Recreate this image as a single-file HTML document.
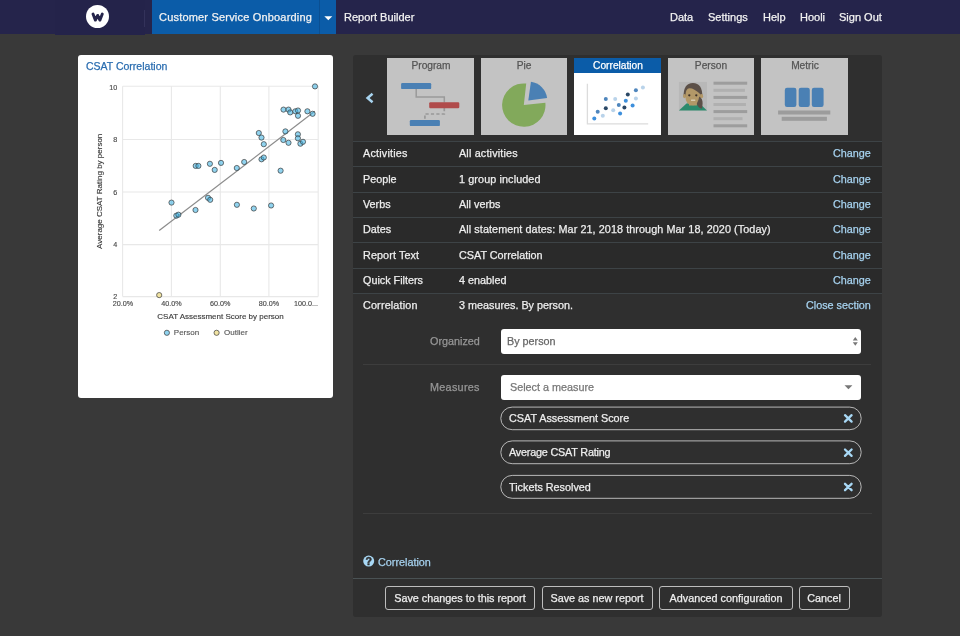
<!DOCTYPE html>
<html><head><meta charset="utf-8"><title>Report Builder</title>
<style>
html,body{margin:0;padding:0;width:960px;height:636px;overflow:hidden;background:#393939;font-family:"Liberation Sans",sans-serif;}
.a{position:absolute;box-sizing:border-box;}
.t{position:absolute;white-space:nowrap;line-height:1;will-change:transform;-webkit-text-stroke:0.25px currentColor;}
svg{position:absolute;left:0;top:0;}
</style></head><body>
<div class="a" style="left:0;top:0;width:960px;height:34px;background:#25244b"></div>
<div class="a" style="left:54.5px;top:0;width:90.5px;height:35px;background:#24234a"></div>
<div class="a" style="left:86px;top:5.2px;width:23px;height:23px;border-radius:50%;background:#fff"></div>
<div class="a" style="left:144px;top:10px;width:1px;height:17px;background:#33325a"></div>
<div class="a" style="left:152px;top:0;width:184.3px;height:34px;background:#0b5ca8"></div>
<div class="a" style="left:318.5px;top:0;width:1px;height:34px;background:#0a4f92"></div>
<div class="t" style="left:158.75px;top:11.89px;font-size:11.0px;color:#f2f2f2;letter-spacing:0.19px;">Customer Service Onboarding</div>
<div class="t" style="left:343.75px;top:11.89px;font-size:11.0px;color:#f2f2f2;">Report Builder</div>
<div class="t" style="left:670.00px;top:11.89px;font-size:11.0px;color:#f2f2f2;">Data</div>
<div class="t" style="left:707.50px;top:11.89px;font-size:11.0px;color:#f2f2f2;">Settings</div>
<div class="t" style="left:762.50px;top:11.89px;font-size:11.0px;color:#f2f2f2;">Help</div>
<div class="t" style="left:799.75px;top:11.89px;font-size:11.0px;color:#f2f2f2;">Hooli</div>
<div class="t" style="left:838.75px;top:11.89px;font-size:11.0px;color:#f2f2f2;">Sign Out</div>
<div class="a" style="left:78px;top:55px;width:254.5px;height:343px;background:#fff;border-radius:3px"></div>
<div class="t" style="left:86.00px;top:60.71px;font-size:10.5px;color:#2a6db0;">CSAT Correlation</div>
<div class="a" style="left:353px;top:55px;width:529px;height:562px;background:#2f2f2f;border-radius:3px"></div>
<div class="a" style="left:353px;top:141px;width:529px;height:152px;background:#2a2a2a"></div>
<div class="a" style="left:353px;top:141px;width:529px;height:1px;background:#3d4346"></div>
<div class="t" style="left:363.40px;top:148.26px;font-size:10.8px;color:#eeeeee;letter-spacing:0.2px;">Activities</div>
<div class="t" style="left:458.70px;top:148.26px;font-size:10.8px;color:#eeeeee;letter-spacing:0.17px;">All activities</div>
<div class="t" style="right:88.90px;top:148.26px;font-size:10.8px;color:#a6d2ef;">Change</div>
<div class="a" style="left:353px;top:166px;width:529px;height:1px;background:#3d4346"></div>
<div class="t" style="left:363.40px;top:173.59px;font-size:10.8px;color:#eeeeee;">People</div>
<div class="t" style="left:458.70px;top:173.59px;font-size:10.8px;color:#eeeeee;letter-spacing:0.11px;">1 group included</div>
<div class="t" style="right:88.90px;top:173.59px;font-size:10.8px;color:#a6d2ef;">Change</div>
<div class="a" style="left:353px;top:192px;width:529px;height:1px;background:#3d4346"></div>
<div class="t" style="left:363.40px;top:198.92px;font-size:10.8px;color:#eeeeee;">Verbs</div>
<div class="t" style="left:458.70px;top:198.92px;font-size:10.8px;color:#eeeeee;">All verbs</div>
<div class="t" style="right:88.90px;top:198.92px;font-size:10.8px;color:#a6d2ef;">Change</div>
<div class="a" style="left:353px;top:217px;width:529px;height:1px;background:#3d4346"></div>
<div class="t" style="left:363.40px;top:224.26px;font-size:10.8px;color:#eeeeee;">Dates</div>
<div class="t" style="left:458.70px;top:224.26px;font-size:10.8px;color:#eeeeee;letter-spacing:0.08px;">All statement dates: Mar 21, 2018 through Mar 18, 2020 (Today)</div>
<div class="t" style="right:88.90px;top:224.26px;font-size:10.8px;color:#a6d2ef;">Change</div>
<div class="a" style="left:353px;top:242px;width:529px;height:1px;background:#3d4346"></div>
<div class="t" style="left:363.40px;top:249.59px;font-size:10.8px;color:#eeeeee;letter-spacing:0.1px;">Report Text</div>
<div class="t" style="left:458.70px;top:249.59px;font-size:10.8px;color:#eeeeee;">CSAT Correlation</div>
<div class="t" style="right:88.90px;top:249.59px;font-size:10.8px;color:#a6d2ef;">Change</div>
<div class="a" style="left:353px;top:268px;width:529px;height:1px;background:#3d4346"></div>
<div class="t" style="left:363.40px;top:274.92px;font-size:10.8px;color:#eeeeee;">Quick Filters</div>
<div class="t" style="left:458.70px;top:274.92px;font-size:10.8px;color:#eeeeee;">4 enabled</div>
<div class="t" style="right:88.90px;top:274.92px;font-size:10.8px;color:#a6d2ef;">Change</div>
<div class="a" style="left:353px;top:293px;width:529px;height:1px;background:#3d4346"></div>
<div class="t" style="left:363.40px;top:300.26px;font-size:10.8px;color:#eeeeee;letter-spacing:0.16px;">Correlation</div>
<div class="t" style="left:458.70px;top:300.26px;font-size:10.8px;color:#eeeeee;">3 measures. By person.</div>
<div class="t" style="right:88.90px;top:300.26px;font-size:10.8px;color:#a6d2ef;">Close section</div>
<div class="t" style="right:480.00px;top:335.96px;font-size:10.8px;color:#979797;">Organized</div>
<div class="a" style="left:500.7px;top:329.1px;width:360.3px;height:24.7px;background:#fff;border-radius:3px"></div>
<div class="t" style="left:507.00px;top:335.66px;font-size:10.8px;color:#666;">By person</div>
<div class="a" style="left:363.3px;top:364px;width:508.2px;height:1px;background:#3d3d3d"></div>
<div class="t" style="right:480.00px;top:382.06px;font-size:10.8px;color:#979797;letter-spacing:0.3px;">Measures</div>
<div class="a" style="left:500.7px;top:375px;width:360.3px;height:24.7px;background:#fff;border-radius:3px"></div>
<div class="t" style="left:509.70px;top:381.86px;font-size:10.8px;color:#777;">Select a measure</div>
<div class="t" style="left:508.60px;top:412.96px;font-size:10.8px;color:#eeeeee;">CSAT Assessment Score</div>
<div class="t" style="left:508.60px;top:447.26px;font-size:10.8px;color:#eeeeee;letter-spacing:-0.19px;">Average CSAT Rating</div>
<div class="t" style="left:508.60px;top:481.56px;font-size:10.8px;color:#eeeeee;">Tickets Resolved</div>
<div class="a" style="left:363.3px;top:513px;width:508.4px;height:1px;background:#3d3d3d"></div>
<div class="t" style="left:378.00px;top:556.66px;font-size:10.8px;color:#a6d2ef;letter-spacing:0px;">Correlation</div>
<div class="a" style="left:353px;top:578px;width:529px;height:1px;background:#4a5254"></div>
<div class="a" style="left:385px;top:586.4px;width:150.40px;height:24px;border:1px solid #bdbdbd;border-radius:3px"></div>
<div class="t" style="left:260.20px;width:400px;text-align:center;top:592.86px;font-size:10.8px;color:#eeeeee;">Save changes to this report</div>
<div class="a" style="left:542.1px;top:586.4px;width:110.50px;height:24px;border:1px solid #bdbdbd;border-radius:3px"></div>
<div class="t" style="left:397.35px;width:400px;text-align:center;top:592.86px;font-size:10.8px;color:#eeeeee;">Save as new report</div>
<div class="a" style="left:658.75px;top:586.4px;width:133.75px;height:24px;border:1px solid #bdbdbd;border-radius:3px"></div>
<div class="t" style="left:525.62px;width:400px;text-align:center;top:592.86px;font-size:10.8px;color:#eeeeee;">Advanced configuration</div>
<div class="a" style="left:799px;top:586.4px;width:50.50px;height:24px;border:1px solid #bdbdbd;border-radius:3px"></div>
<div class="t" style="left:624.25px;width:400px;text-align:center;top:592.86px;font-size:10.8px;color:#eeeeee;">Cancel</div>
<div class="a" style="left:387px;top:58px;width:87px;height:77px;background:#c3c3c3"></div>
<div class="t" style="left:230.50px;width:400px;text-align:center;top:60.67px;font-size:10.2px;color:#555555;">Program</div>
<div class="a" style="left:481px;top:58px;width:86px;height:77px;background:#c3c3c3"></div>
<div class="t" style="left:324.00px;width:400px;text-align:center;top:60.67px;font-size:10.2px;color:#555555;">Pie</div>
<div class="a" style="left:574px;top:58px;width:87px;height:77px;background:#fff"></div>
<div class="a" style="left:574px;top:58px;width:87px;height:15px;background:#0b5ca8"></div>
<div class="t" style="left:417.50px;width:400px;text-align:center;top:60.67px;font-size:10.2px;color:#ffffff;">Correlation</div>
<div class="a" style="left:668px;top:58px;width:86px;height:77px;background:#c3c3c3"></div>
<div class="t" style="left:511.00px;width:400px;text-align:center;top:60.67px;font-size:10.2px;color:#555555;">Person</div>
<div class="a" style="left:761px;top:58px;width:87px;height:77px;background:#c3c3c3"></div>
<div class="t" style="left:604.50px;width:400px;text-align:center;top:60.67px;font-size:10.2px;color:#555555;">Metric</div>
<svg width="960" height="636" viewBox="0 0 960 636">
<path d="M93.0 14.0 L95.4 20.1 L97.65 15.4 L99.9 20.1 L102.3 14.0" fill="none" stroke="#25244b" stroke-width="2.9" stroke-linecap="round" stroke-linejoin="round"/>
<path d="M324.3 16.3 L332.3 16.3 L328.3 20.3 Z" fill="#fff"/>
<line x1="122.6" y1="86.3" x2="122.6" y2="296.6" stroke="#e8e8e8" stroke-width="1.1"/>
<line x1="171.4" y1="86.3" x2="171.4" y2="296.6" stroke="#e8e8e8" stroke-width="1.1"/>
<line x1="220.3" y1="86.3" x2="220.3" y2="296.6" stroke="#e8e8e8" stroke-width="1.1"/>
<line x1="268.9" y1="86.3" x2="268.9" y2="296.6" stroke="#e8e8e8" stroke-width="1.1"/>
<line x1="318.2" y1="86.3" x2="318.2" y2="296.6" stroke="#e8e8e8" stroke-width="1.1"/>
<line x1="122.6" y1="86.3" x2="318.2" y2="86.3" stroke="#e8e8e8" stroke-width="1.1"/>
<line x1="122.6" y1="139.5" x2="318.2" y2="139.5" stroke="#e8e8e8" stroke-width="1.1"/>
<line x1="122.6" y1="192.0" x2="318.2" y2="192.0" stroke="#e8e8e8" stroke-width="1.1"/>
<line x1="122.6" y1="244.6" x2="318.2" y2="244.6" stroke="#e8e8e8" stroke-width="1.1"/>
<line x1="122.6" y1="296.6" x2="318.2" y2="296.6" stroke="#e8e8e8" stroke-width="1.1"/>
<line x1="159.2" y1="230.6" x2="314.8" y2="111.3" stroke="#8c8c8c" stroke-width="1.2"/>
<circle cx="315" cy="86.4" r="2.6" fill="#3fb3e3" fill-opacity="0.58" stroke="#3a3a3a" stroke-width="0.7"/>
<circle cx="283.5" cy="109.6" r="2.6" fill="#3fb3e3" fill-opacity="0.58" stroke="#3a3a3a" stroke-width="0.7"/>
<circle cx="288.5" cy="109.6" r="2.6" fill="#3fb3e3" fill-opacity="0.58" stroke="#3a3a3a" stroke-width="0.7"/>
<circle cx="290.2" cy="112.4" r="2.6" fill="#3fb3e3" fill-opacity="0.58" stroke="#3a3a3a" stroke-width="0.7"/>
<circle cx="295.3" cy="111.3" r="2.6" fill="#3fb3e3" fill-opacity="0.58" stroke="#3a3a3a" stroke-width="0.7"/>
<circle cx="298" cy="110.5" r="2.6" fill="#3fb3e3" fill-opacity="0.58" stroke="#3a3a3a" stroke-width="0.7"/>
<circle cx="298" cy="115.8" r="2.6" fill="#3fb3e3" fill-opacity="0.58" stroke="#3a3a3a" stroke-width="0.7"/>
<circle cx="307.4" cy="111.3" r="2.6" fill="#3fb3e3" fill-opacity="0.58" stroke="#3a3a3a" stroke-width="0.7"/>
<circle cx="312.6" cy="113.8" r="2.6" fill="#3fb3e3" fill-opacity="0.58" stroke="#3a3a3a" stroke-width="0.7"/>
<circle cx="258.8" cy="133" r="2.6" fill="#3fb3e3" fill-opacity="0.58" stroke="#3a3a3a" stroke-width="0.7"/>
<circle cx="261.5" cy="137.6" r="2.6" fill="#3fb3e3" fill-opacity="0.58" stroke="#3a3a3a" stroke-width="0.7"/>
<circle cx="263.8" cy="144.2" r="2.6" fill="#3fb3e3" fill-opacity="0.58" stroke="#3a3a3a" stroke-width="0.7"/>
<circle cx="285.4" cy="131.4" r="2.6" fill="#3fb3e3" fill-opacity="0.58" stroke="#3a3a3a" stroke-width="0.7"/>
<circle cx="283.3" cy="140" r="2.6" fill="#3fb3e3" fill-opacity="0.58" stroke="#3a3a3a" stroke-width="0.7"/>
<circle cx="288.5" cy="142.8" r="2.6" fill="#3fb3e3" fill-opacity="0.58" stroke="#3a3a3a" stroke-width="0.7"/>
<circle cx="297.9" cy="134.3" r="2.6" fill="#3fb3e3" fill-opacity="0.58" stroke="#3a3a3a" stroke-width="0.7"/>
<circle cx="297.9" cy="138.3" r="2.6" fill="#3fb3e3" fill-opacity="0.58" stroke="#3a3a3a" stroke-width="0.7"/>
<circle cx="300.4" cy="143.7" r="2.6" fill="#3fb3e3" fill-opacity="0.58" stroke="#3a3a3a" stroke-width="0.7"/>
<circle cx="303" cy="141.8" r="2.6" fill="#3fb3e3" fill-opacity="0.58" stroke="#3a3a3a" stroke-width="0.7"/>
<circle cx="261.5" cy="159.3" r="2.6" fill="#3fb3e3" fill-opacity="0.58" stroke="#3a3a3a" stroke-width="0.7"/>
<circle cx="263.8" cy="157.5" r="2.6" fill="#3fb3e3" fill-opacity="0.58" stroke="#3a3a3a" stroke-width="0.7"/>
<circle cx="244.2" cy="162" r="2.6" fill="#3fb3e3" fill-opacity="0.58" stroke="#3a3a3a" stroke-width="0.7"/>
<circle cx="236.8" cy="168" r="2.6" fill="#3fb3e3" fill-opacity="0.58" stroke="#3a3a3a" stroke-width="0.7"/>
<circle cx="221" cy="162.9" r="2.6" fill="#3fb3e3" fill-opacity="0.58" stroke="#3a3a3a" stroke-width="0.7"/>
<circle cx="280.6" cy="170.7" r="2.6" fill="#3fb3e3" fill-opacity="0.58" stroke="#3a3a3a" stroke-width="0.7"/>
<circle cx="195.7" cy="165.9" r="2.6" fill="#3fb3e3" fill-opacity="0.58" stroke="#3a3a3a" stroke-width="0.7"/>
<circle cx="198.4" cy="165.9" r="2.6" fill="#3fb3e3" fill-opacity="0.58" stroke="#3a3a3a" stroke-width="0.7"/>
<circle cx="209.9" cy="163.8" r="2.6" fill="#3fb3e3" fill-opacity="0.58" stroke="#3a3a3a" stroke-width="0.7"/>
<circle cx="214.7" cy="169.9" r="2.6" fill="#3fb3e3" fill-opacity="0.58" stroke="#3a3a3a" stroke-width="0.7"/>
<circle cx="171.5" cy="202.6" r="2.6" fill="#3fb3e3" fill-opacity="0.58" stroke="#3a3a3a" stroke-width="0.7"/>
<circle cx="176.3" cy="215.7" r="2.6" fill="#3fb3e3" fill-opacity="0.58" stroke="#3a3a3a" stroke-width="0.7"/>
<circle cx="178.4" cy="214.7" r="2.6" fill="#3fb3e3" fill-opacity="0.58" stroke="#3a3a3a" stroke-width="0.7"/>
<circle cx="195.5" cy="210" r="2.6" fill="#3fb3e3" fill-opacity="0.58" stroke="#3a3a3a" stroke-width="0.7"/>
<circle cx="208" cy="197.8" r="2.6" fill="#3fb3e3" fill-opacity="0.58" stroke="#3a3a3a" stroke-width="0.7"/>
<circle cx="210.2" cy="199.8" r="2.6" fill="#3fb3e3" fill-opacity="0.58" stroke="#3a3a3a" stroke-width="0.7"/>
<circle cx="236.9" cy="204.8" r="2.6" fill="#3fb3e3" fill-opacity="0.58" stroke="#3a3a3a" stroke-width="0.7"/>
<circle cx="253.8" cy="208.5" r="2.6" fill="#3fb3e3" fill-opacity="0.58" stroke="#3a3a3a" stroke-width="0.7"/>
<circle cx="271.1" cy="205.5" r="2.6" fill="#3fb3e3" fill-opacity="0.58" stroke="#3a3a3a" stroke-width="0.7"/>
<circle cx="159.2" cy="295.1" r="2.6" fill="#f1e3a2" stroke="#3a3a3a" stroke-width="0.7"/>
<circle cx="166.9" cy="332.8" r="2.6" fill="#8fd3ef" stroke="#3a3a3a" stroke-width="0.7"/>
<circle cx="216.6" cy="332.8" r="2.6" fill="#f1e3a2" stroke="#3a3a3a" stroke-width="0.7"/>
<g font-family="Liberation Sans" font-size="7.2" fill="#4a4a4a" stroke="#4a4a4a" stroke-width="0.15">
<text x="117.3" y="89.9" text-anchor="end">10</text>
<text x="117.3" y="142.1" text-anchor="end">8</text>
<text x="117.3" y="194.7" text-anchor="end">6</text>
<text x="117.3" y="247.2" text-anchor="end">4</text>
<text x="117.3" y="299" text-anchor="end">2</text>
<text x="123" y="306.4" text-anchor="middle">20.0%</text>
<text x="171.4" y="306.4" text-anchor="middle">40.0%</text>
<text x="220.3" y="306.4" text-anchor="middle">60.0%</text>
<text x="268.9" y="306.4" text-anchor="middle">80.0%</text>
<text x="294" y="306.4">100.0...</text>
</g>
<g font-family="Liberation Sans" font-size="8" fill="#3c3c3c" stroke="#3c3c3c" stroke-width="0.15">
<text x="220.5" y="318.6" text-anchor="middle">CSAT Assessment Score by person</text>
<text x="0" y="0" text-anchor="middle" transform="translate(101.6 191.3) rotate(-90)">Average CSAT Rating by person</text>
</g>
<g font-family="Liberation Sans" font-size="8" fill="#5a5a5a" stroke="#5a5a5a" stroke-width="0.15">
<text x="173.8" y="334.5">Person</text>
<text x="224.1" y="334.5">Outlier</text>
</g>
<path d="M371.6 94.6 L367.6 98 L371.6 101.4" fill="none" stroke="#a8d4f0" stroke-width="2.5" stroke-linecap="square"/>
<path d="M416.2 89 V97 H444.3 V102.5" fill="none" stroke="#9a9a9a" stroke-width="1.5"/>
<path d="M444.3 108 V114 H424.9 V120" fill="none" stroke="#999" stroke-width="1.7" stroke-dasharray="3.2 2.2"/>
<rect x="401.1" y="83.1" width="30.1" height="6" rx="1.2" fill="#4a80b4"/>
<rect x="429.2" y="102.2" width="30.1" height="6" rx="1.2" fill="#b04b4b"/>
<rect x="409.8" y="120.1" width="30.1" height="6" rx="1.2" fill="#4a80b4"/>
<path d="M523.8 105.1 L545.36 102.64 A21.7 21.7 0 1 1 526.22 83.54 Z" fill="#82a95b"/>
<path d="M528.3 100.6 L530.94 81.78 A19.0 19.0 0 0 1 547.12 97.96 Z" fill="#4a80b4"/>
<path d="M587.4 83.7 V123.9 H648.2" fill="none" stroke="#dcdcdc" stroke-width="1.3"/>
<circle cx="594.3" cy="118.5" r="2" fill="#3d8fdc"/>
<circle cx="597.7" cy="111.8" r="2" fill="#4f86bd"/>
<circle cx="602.8" cy="115.8" r="2" fill="#b9d3ea"/>
<circle cx="605.8" cy="99.1" r="2" fill="#4f86bd"/>
<circle cx="605.8" cy="108.2" r="2" fill="#2b4866"/>
<circle cx="613.2" cy="110.2" r="2" fill="#b9d3ea"/>
<circle cx="615.2" cy="98.9" r="2" fill="#b9d3ea"/>
<circle cx="618.8" cy="105.1" r="2" fill="#4f86bd"/>
<circle cx="620.1" cy="113.6" r="2" fill="#3d8fdc"/>
<circle cx="624.4" cy="107.4" r="2" fill="#2b4866"/>
<circle cx="625.8" cy="100.7" r="2" fill="#3d8fdc"/>
<circle cx="627.8" cy="94.6" r="2" fill="#2b4866"/>
<circle cx="632.6" cy="105.4" r="2" fill="#3d8fdc"/>
<circle cx="635.9" cy="98.6" r="2" fill="#b9d3ea"/>
<circle cx="635.9" cy="90.3" r="2" fill="#4f86bd"/>
<circle cx="642.9" cy="87.4" r="2" fill="#b9d3ea"/>
<rect x="678.9" y="81.9" width="28.1" height="28.6" fill="#b8b8b8"/>
<path d="M678.9 110.5 L686.5 103.4 Q692.8 102 699.5 103.4 L707 110.5 Z" fill="#2c8a6c"/>
<rect x="689" y="100.5" width="7.8" height="5" fill="#b39868"/>
<path d="M683.6 97 Q683.2 83 692.9 83 Q702.6 83 702.3 97 Z" fill="#5c5048"/>
<ellipse cx="684.5" cy="96.2" rx="1.4" ry="2.1" fill="#b39868"/>
<ellipse cx="701.7" cy="96.2" rx="1.4" ry="2.1" fill="#b39868"/>
<path d="M685.4 95.5 Q685.6 88.6 689.4 88.3 Q692 88.2 694 89.4 Q698.5 91.8 700.9 94.8 Q701.2 105.3 693.1 105.3 Q685.2 105.3 685.4 95.5 Z" fill="#b39868"/>
<path d="M699.3 96.5 Q702.8 98.5 702.6 103.5 Q702.5 107.8 701.6 108.8 Q697.6 107.5 696.8 103.6 Q698.6 100.6 699.3 96.5 Z" fill="#5c5048"/>
<circle cx="689.3" cy="95.3" r="1.15" fill="#3d3129"/><circle cx="696.3" cy="95.3" r="1.15" fill="#3d3129"/>
<rect x="691" y="99.4" width="4.3" height="1.5" rx="0.5" fill="#d8cbb0"/>
<rect x="713.5" y="81.70" width="33.7" height="3" fill="#9d9d9d"/>
<rect x="713.5" y="88.80" width="31.4" height="3" fill="#b0b0b0"/>
<rect x="713.5" y="95.90" width="33.7" height="3" fill="#9d9d9d"/>
<rect x="713.5" y="103.00" width="32.4" height="3" fill="#b0b0b0"/>
<rect x="713.5" y="110.10" width="33.7" height="3" fill="#9d9d9d"/>
<rect x="713.5" y="117.20" width="29" height="3" fill="#b0b0b0"/>
<rect x="713.5" y="124.30" width="33.7" height="3" fill="#9d9d9d"/>
<rect x="784.8" y="87.8" width="11.60" height="19.1" rx="2.2" fill="#4a80b4"/>
<rect x="798.7" y="87.8" width="11.10" height="19.1" rx="2.2" fill="#4a80b4"/>
<rect x="811.8" y="87.8" width="11.80" height="19.1" rx="2.2" fill="#4a80b4"/>
<rect x="778.1" y="110.5" width="52.2" height="4" fill="#9c9c9c"/>
<rect x="781.7" y="116.8" width="45.2" height="4" fill="#9c9c9c"/>
<path d="M852.8 340.4 L857.8 340.4 L855.3 337 Z" fill="#777"/>
<path d="M852.8 342.3 L857.8 342.3 L855.3 345.7 Z" fill="#777"/>
<path d="M844.5 385.3 L852.4 385.3 L848.45 389.2 Z" fill="#777"/>
<rect x="500.8" y="407.1" width="360.4" height="22.60" rx="11.4" fill="none" stroke="#b8b8b8" stroke-width="1"/>
<rect x="500.8" y="440.9" width="360.4" height="22.80" rx="11.4" fill="none" stroke="#b8b8b8" stroke-width="1"/>
<rect x="500.8" y="475.4" width="360.4" height="22.90" rx="11.4" fill="none" stroke="#b8b8b8" stroke-width="1"/>
<path d="M845 415.20 L851.6 421.60 M851.6 415.20 L845 421.60" stroke="#a8d8f5" stroke-width="2.3" stroke-linecap="round"/>
<path d="M845 449.50 L851.6 455.90 M851.6 449.50 L845 455.90" stroke="#a8d8f5" stroke-width="2.3" stroke-linecap="round"/>
<path d="M845 483.80 L851.6 490.20 M851.6 483.80 L845 490.20" stroke="#a8d8f5" stroke-width="2.3" stroke-linecap="round"/>
<circle cx="368.7" cy="561.1" r="5.5" fill="#a8d8f5"/>
<text x="368.8" y="565.0" text-anchor="middle" font-family="Liberation Sans" font-weight="bold" font-size="10.5" fill="#2f2f2f" stroke="#2f2f2f" stroke-width="0.5">?</text>
</svg>
</body></html>
